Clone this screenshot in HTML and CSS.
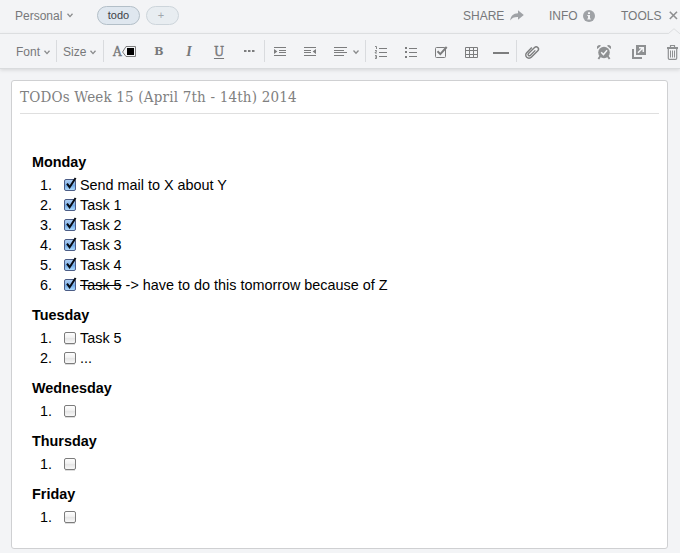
FILE: index.html
```
<!DOCTYPE html>
<html lang="en">
<head>
<meta charset="utf-8">
<title>TODOs</title>
<link rel="stylesheet" href="styles.css">
</head>
<body>
<svg class="defs" width="0" height="0">
  <defs>
    <linearGradient id="blue" x1="0" y1="0" x2="0" y2="1"><stop offset="0" stop-color="#b4d2f3"/><stop offset=".45" stop-color="#86b5ea"/><stop offset=".5" stop-color="#6ba5e5"/><stop offset="1" stop-color="#b5e0ff"/></linearGradient>
    <linearGradient id="grey" x1="0" y1="0" x2="0" y2="1"><stop offset="0" stop-color="#fff"/><stop offset=".45" stop-color="#f2f2f2"/><stop offset=".5" stop-color="#e4e4e4"/><stop offset="1" stop-color="#fafafa"/></linearGradient>
    <symbol id="on" viewBox="0 0 16 18"><rect x=".5" y="3.5" width="11" height="11" rx="1.5" fill="url(#blue)" stroke="#4c5d86"/><path d="M3 7.6L5.6 11.2L11.6 2" fill="none" stroke="#080c14" stroke-width="2"/></symbol>
    <symbol id="off" viewBox="0 0 16 18"><path d="M1 15.5H11" stroke="#ddd"/><rect x=".5" y="3.5" width="11" height="11" rx="1.5" fill="url(#grey)" stroke="#7c7c7c"/></symbol>
    <symbol id="chev" viewBox="0 0 6 5"><path d="M.5 .8L3 3.6L5.5 .8" fill="none" stroke="#8a8b8c" stroke-width="1.3"/></symbol>
  </defs>
</svg>
<header class="top">
  <span class="notebook">Personal</span><svg class="chev"><use href="#chev"/></svg>
  <span class="tag">todo</span>
  <span class="tag add">+</span>
  <span class="share">SHARE</span>
  <svg class="share-icon" width="14" height="12" viewBox="0 0 14 12"><path d="M8 .2L13.8 5L8 9.8V6.9C4 6.8 2 7.7 .2 10.5C.7 6 3.2 3.4 8 3.2Z" fill="#9fa2a6"/></svg>
  <span class="info">INFO</span>
  <svg class="info-icon" width="12" height="12" viewBox="0 0 12 12"><circle cx="6" cy="6" r="6" fill="#9fa2a6"/><path d="M5 2.2H7V4H5ZM4.3 5H7V8.5H7.8V9.6H4.3V8.5H5V6.1H4.3Z" fill="#f3f4f6"/></svg>
  <span class="tools">TOOLS</span>
  <svg class="close" width="9" height="9" viewBox="0 0 9 9"><path d="M.8 .8L8 8M8 .8L.8 8" stroke="#8e8f91" stroke-width="1.6"/></svg>
  <svg class="notch" width="14" height="6" viewBox="0 0 14 6"><path d="M1 6L7 .7L13 6Z" fill="#f3f4f6"/><path d="M0 5.5H1.5L7 .7L12.5 5.5H14" fill="none" stroke="#dcdee0"/></svg>
</header>
<nav class="bar">
  <div class="cell font sep">Font<svg class="chev"><use href="#chev"/></svg></div>
  <div class="cell size sep">Size<svg class="chev"><use href="#chev"/></svg></div>
  <div class="cell color"><b>A</b><svg width="14" height="12" viewBox="0 0 14 12"><path d="M.6 6L4 .5H13.5V10.5H4Z" fill="#f3f4f6" stroke="#7c7d7e"/><rect x="5" y="2" width="7" height="7" fill="#000"/></svg></div>
  <div class="cell glyph"><b>B</b></div>
  <div class="cell glyph"><i>I</i></div>
  <div class="cell glyph"><u>U</u></div>
  <div class="cell dots sep"><svg width="30" height="34"><path d="M10 16h2.500v2h-2.500zM14 16h2.500v2h-2.500zM18 16h2.500v2h-2.500z" fill="#7c7d7e"/></svg></div>
  <div class="cell"><svg width="30" height="34" fill="#7c7d7e"><path d="M9 13H21v1H9zM14 16h7v1h-7zM14 18h7v1h-7zM9 21H21v1H9zM9 15L12.400 17.500L9 20z"/></svg></div>
  <div class="cell"><svg width="30" height="34" fill="#7c7d7e"><path d="M9 13H21v1H9zM9 16h7v1h-7zM9 18h7v1h-7zM9 21H21v1H9zM21 15L17.600 17.500L21 20z"/></svg></div>
  <div class="cell align sep"><svg width="40" height="34" fill="#7c7d7e"><path d="M9 13H22v1H9zM9 16h10v1H9zM9 18h13v1H9zM9 21h10v1H9z"/><path d="M28.500 16.500L31 19.300L33.500 16.500" fill="none" stroke="#8a8b8c" stroke-width="1.300"/></svg></div>
  <div class="cell"><svg width="30" height="34" fill="#7c7d7e"><path d="M13 14h8v1h-8zM13 18h8v1h-8zM13 22h8v1h-8z"/><path d="M9 12.500h1.500V15M9 16.500h1.500v1L9 18.500v.5h2M9 21.500h1.500v3H9M9 23h1.500" fill="none" stroke="#7c7d7e" stroke-width=".9"/></svg></div>
  <div class="cell"><svg width="30" height="34" fill="#7c7d7e"><path d="M13 14h8v1h-8zM13 18h8v1h-8zM13 22h8v1h-8zM9 13h2v2H9zM9 17h2v2H9zM9 22h2v2H9z"/></svg></div>
  <div class="cell"><svg width="30" height="34" fill="none" stroke="#7c7d7e"><rect x="9.500" y="13.500" width="10" height="10" rx="1"/><path d="M11.500 17.300L14.300 20.100L20.700 13" stroke-width="2"/></svg></div>
  <div class="cell"><svg width="30" height="34" fill="none" stroke="#7c7d7e"><path d="M9.500 13.500h12v10h-12zM13.500 13.500v10M17.500 13.500v10M9.500 16.500h12M9.500 20.500h12"/></svg></div>
  <div class="cell sep"><svg width="30" height="34"><path d="M7 18h16v2H7z" fill="#7c7d7e"/></svg></div>
  <div class="cell"><svg width="30" height="34"><g transform="translate(15 18) rotate(45)" fill="none" stroke="#7c7d7e" stroke-width="1.400"><path d="M-3.300 -3V4.200A3.200 3.200 0 0 0 3.200 4.200V-5A2.300 2.300 0 0 0 -1.400 -5V3.600A1.300 1.300 0 0 0 1.200 3.600V-3.500"/></g></svg></div>
  <div class="actions">
    <svg width="14" height="15" viewBox="0 0 15 16"><path d="M.3 4.200A2.600 2.600 0 0 1 4.300 .9ZM14.700 4.200A2.600 2.600 0 0 0 10.700 .9Z" fill="#8e9092"/><circle cx="7.500" cy="8" r="6.200" fill="#8e9092"/><path d="M3.500 12L1.500 15M11.500 12L13.500 15" stroke="#8e9092" stroke-width="2"/><path d="M4.500 7.800L6.900 10.200L10.800 5.700" fill="none" stroke="#f3f4f6" stroke-width="1.600"/></svg>
    <svg width="14" height="14" viewBox="0 0 14 14"><path d="M4 0H14V10H4ZM0 4H2V12H10V14H0Z" fill="#8e9092"/><path d="M6 7.800L10.500 3.300M7 2.700H11.300V7" fill="none" stroke="#f3f4f6" stroke-width="1.500"/></svg>
    <svg width="11" height="15" viewBox="0 0 11 15" fill="none" stroke="#8e9092"><path d="M0 3H11" stroke-width="2"/><path d="M3.500 2V.5H7.500V2M1.300 4V13.200Q1.300 14.400 2.500 14.400H8.500Q9.700 14.400 9.700 13.200V4" stroke-width="1.200"/><path d="M3.500 5.500V12.500M5.500 5.500V12.500M7.500 5.500V12.500"/></svg>
  </div>
</nav>
<main class="note">
  <h1><span>TODOs Week 15 (April 7th - 14th) 2014</span></h1>
  <section class="body">
    <h2>Monday</h2>
    <ol>
      <li><svg class="box"><use href="#on"/></svg>Send mail to X about Y</li>
      <li><svg class="box"><use href="#on"/></svg>Task 1</li>
      <li><svg class="box"><use href="#on"/></svg>Task 2</li>
      <li><svg class="box"><use href="#on"/></svg>Task 3</li>
      <li><svg class="box"><use href="#on"/></svg>Task 4</li>
      <li><svg class="box"><use href="#on"/></svg><s>Task 5</s>&nbsp;-&gt; have to do this tomorrow because of Z</li>
    </ol>
    <h2>Tuesday</h2>
    <ol>
      <li><svg class="box"><use href="#off"/></svg>Task 5</li>
      <li><svg class="box"><use href="#off"/></svg>...</li>
    </ol>
    <h2>Wednesday</h2>
    <ol><li><svg class="box"><use href="#off"/></svg></li></ol>
    <h2>Thursday</h2>
    <ol><li><svg class="box"><use href="#off"/></svg></li></ol>
    <h2>Friday</h2>
    <ol><li><svg class="box"><use href="#off"/></svg></li></ol>
  </section>
</main>
</body>
</html>
```
FILE: styles.css
```
*, *::before, *::after { box-sizing: border-box; }
body {
  margin: 0;
  height: 553px;
  overflow: hidden;
  background: #f3f4f6;
  color: #000;
  font-family: "Liberation Sans", Arial, sans-serif;
}
svg { display: block; flex: none; }
.defs { position: absolute; }
.chev { width: 6px; height: 5px; }

.top {
  position: relative;
  display: flex;
  align-items: center;
  height: 34px;
  padding: 0 0 2px 15px;
  border-bottom: 1px solid #dcdee0;
  color: #77787a;
  font-size: 12px;
  white-space: nowrap;
}
.notebook { width: 52px; }
.tag {
  width: 43px;
  height: 19px;
  margin-left: 24px;
  border: 1px solid #b3bfc8;
  border-radius: 10px;
  background: #dfe7ef;
  color: #3e4246;
  font-size: 11px;
  line-height: 17px;
  text-align: center;
}
.add {
  width: 33px;
  margin-left: 6px;
  padding-right: 3px;
  border-color: #cdd5db;
  background: #e8edf1;
  color: #a0a7ad;
}
.share { width: 47px; margin-left: 284px; }
.info { width: 34px; margin-left: 25px; }
.tools { width: 41px; margin-left: 26px; }
.close { margin-left: 7px; }
.notch { position: absolute; left: 667px; bottom: -1px; }

.bar {
  display: flex;
  height: 35px;
  border-bottom: 1px solid #d9dbdd;
  box-shadow: 0 1px 4px rgba(0, 0, 0, .13);
  color: #77787a;
  font-size: 12px;
}
.cell {
  position: relative;
  display: flex;
  width: 30px;
  height: 34px;
  align-items: center;
}
.sep { width: 31px; }
.sep::after {
  content: "";
  position: absolute;
  right: 0;
  top: 6px;
  width: 1px;
  height: 22px;
  background: #d9dbde;
}
.font { width: 57px; padding: 2px 0 0 16px; }
.size { width: 47px; padding: 2px 0 0 6px; }
.font .chev, .size .chev { margin-left: 4px; }
.color { width: 40px; padding: 2px 0 0 9px; }
.glyph { justify-content: center; padding-top: 1px; }
.color, .glyph {
  font-family: "DejaVu Serif", serif;
  font-size: 12px;
}
.color b { width: 9px; font-weight: 400; -webkit-text-stroke: .4px #77787a; }
.glyph b { font-size: 11px; }
.glyph i { font-weight: 700; font-family: "Liberation Serif", serif; font-size: 14px; }
.glyph u { -webkit-text-stroke: .4px #77787a; text-underline-offset: 2px; }
.align { width: 41px; }
.actions {
  display: flex;
  align-items: center;
  gap: 21px;
  margin-left: 50px;
  padding-top: 2px;
}

.note {
  width: 657px;
  height: 469px;
  margin: 11px 0 0 11px;
  padding: 0 8px;
  border: 1px solid #cfd0d2;
  border-radius: 3px;
  background: #fff;
}
h1 {
  height: 33px;
  margin: 0;
  border-bottom: 1px solid #dfdfdf;
  color: #808080;
  font: 400 15px/32px "DejaVu Serif Condensed", "DejaVu Serif", serif;
  letter-spacing: .19px;
  white-space: nowrap;
}
.body {
  padding: 38px 0 0 12px;
  font-size: 14.4px;
  line-height: 20px;
}
h2 { margin: 0 0 3px; font-size: 14.4px; line-height: 20px; }
ol { margin: 0 0 10px; padding: 0; list-style: none; counter-reset: n; }
li { display: flex; height: 20px; align-items: center; counter-increment: n; }
li::before { content: counter(n) "."; width: 32px; padding-left: 8px; }
.box { width: 16px; height: 18px; }
```
